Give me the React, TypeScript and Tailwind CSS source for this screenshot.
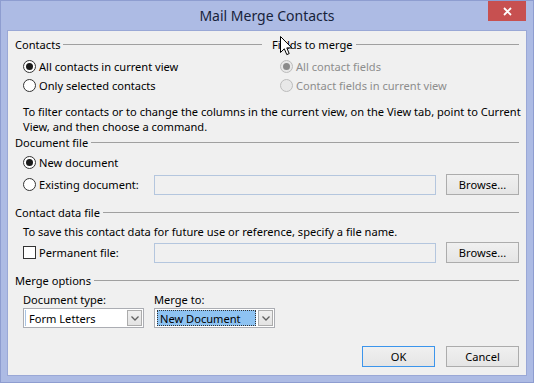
import clsx from "clsx";

const font = { fontFamily: '"Noto Sans", "Open Sans", sans-serif' };

function Radio({ checked, disabled }: { checked?: boolean; disabled?: boolean }) {
  return (
    <span
      className={clsx(
        "flex h-[13px] w-[13px] shrink-0 items-center justify-center rounded-full border",
        disabled ? "border-[#bcbcbc] bg-[#e8e8e8]" : "border-[#333333] bg-white"
      )}
    >
      {checked && (
        <span
          className={clsx(
            "h-[7px] w-[7px] rounded-full",
            disabled ? "bg-[#8a8a8a]" : "bg-[#1a1a1a]"
          )}
        />
      )}
    </span>
  );
}

function GroupHeader({ title }: { title: string }) {
  return (
    <div className="flex h-4 items-center gap-[3px]">
      <span className="whitespace-nowrap text-[#000]">{title}</span>
      <span className="h-px flex-1 bg-[#a0a0a0]" />
    </div>
  );
}

function Button({ label, focused }: { label: string; focused?: boolean }) {
  return (
    <div
      className={clsx(
        "flex h-[21px] w-[73px] shrink-0 items-center justify-center border bg-gradient-to-b from-[#f0f0f0] to-[#e5e5e5] text-black",
        focused ? "border-[#3c95ec]" : "border-[#acacac]"
      )}
    >
      {label}
    </div>
  );
}

function TextBox() {
  return <div className="h-5 w-[282px] shrink-0 border border-[#b4c6de] bg-[#f0f0f0]" />;
}

function Chevron() {
  return (
    <div className="flex h-4 w-[15px] items-center justify-center border border-[#acacac] bg-gradient-to-b from-[#f0f0f0] to-[#e3e3e3]">
      <svg width="8" height="5" viewBox="0 0 8 5">
        <polyline points="0.5,0.5 4,4 7.5,0.5" fill="none" stroke="#606060" strokeWidth="1.3" />
      </svg>
    </div>
  );
}

export default function App() {
  return (
    <div
      className="relative flex h-[383px] w-[534px] flex-col border border-[#8e9dd0] bg-[#adbbe4] text-[11.1px] leading-[15px] text-black"
      style={font}
    >
      {/* title bar */}
      <div className="flex h-[29px] shrink-0 items-center justify-center text-[14px] text-[#17233b]">
        Mail Merge Contacts
      </div>
      <div className="absolute right-[7px] top-0 flex h-5 w-[38px] items-center justify-center bg-[#c75050]">
        <svg width="9" height="9" viewBox="0 0 9 9">
          <path d="M1 1 L8 8 M8 1 L1 8" stroke="white" strokeWidth="1.8" />
        </svg>
      </div>

      {/* dialog body */}
      <div className="mx-[6px] mb-[6px] flex flex-1 flex-col border border-[#9aa8d6] bg-[#f0f0f0] px-[7px] pt-[5px]">
        <div className="grid grid-cols-2 gap-x-[10px]">
          <div>
            <GroupHeader title="Contacts" />
            <div className="mt-[5px] pl-2">
              <label className="flex h-[19px] items-center gap-[3px]">
                <Radio checked />
                All contacts in current view
              </label>
              <label className="flex h-[19px] items-center gap-[3px]">
                <Radio />
                Only selected contacts
              </label>
            </div>
          </div>
          <div>
            <GroupHeader title="Fields to merge" />
            <div className="mt-[5px] pl-2 text-[#8d8d8d]">
              <label className="flex h-[19px] items-center gap-[3px]">
                <Radio checked disabled />
                All contact fields
              </label>
              <label className="flex h-[19px] items-center gap-[3px]">
                <Radio disabled />
                Contact fields in current view
              </label>
            </div>
          </div>
        </div>

        <p className="mt-[9px] whitespace-nowrap pl-2">
          To filter contacts or to change the columns in the current view, on the View tab, point to Current
          <br />
          View, and then choose a command.
        </p>

        <GroupHeader title="Document file" />
        <label className="mt-[3px] flex h-[19px] items-center gap-[3px] pl-2">
          <Radio checked />
          New document
        </label>
        <div className="mt-[2px] flex h-[21px] items-center pl-2">
          <label className="flex w-[131px] items-center gap-[3px]">
            <Radio />
            Existing document:
          </label>
          <TextBox />
          <div className="ml-[10px]">
            <Button label="Browse..." />
          </div>
        </div>

        <div className="mt-[9px]">
          <GroupHeader title="Contact data file" />
        </div>
        <p className="mt-[4px] pl-2">To save this contact data for future use or reference, specify a file name.</p>
        <div className="mt-[3px] flex h-[21px] items-center pl-2">
          <label className="flex w-[131px] items-center gap-[3px]">
            <span className="h-[13px] w-[13px] shrink-0 border border-[#333333] bg-white" />
            Permanent file:
          </label>
          <TextBox />
          <div className="ml-[10px]">
            <Button label="Browse..." />
          </div>
        </div>

        <div className="mt-[9px]">
          <GroupHeader title="Merge options" />
        </div>
        <div className="mt-[4px] flex pl-2">
          <div className="w-[131px]">Document type:</div>
          <div>Merge to:</div>
        </div>
        <div className="mt-px flex pl-2">
          <div className="w-[131px]">
            <div className="flex h-5 w-[121px] items-center border border-[#abadb3] bg-white pl-[1px] pr-px">
              <span className="h-4 w-px bg-[#a9c4e4]" />
              <span className="flex-1 pl-[3px]">Form Letters</span>
              <Chevron />
            </div>
          </div>
          <div className="flex h-5 w-[121px] items-center border border-[#abadb3] bg-white pl-[2px] pr-px">
            <span className="flex h-4 w-[99px] items-center border border-dotted border-[#333] bg-[#8ec3f2] pl-[2px]">
              New Document
            </span>
            <span className="flex-1" />
            <Chevron />
          </div>
        </div>

        <div className="mt-[18px] flex justify-end gap-[11px]">
          <Button label="OK" focused />
          <Button label="Cancel" />
        </div>
      </div>

      {/* mouse pointer */}
      <svg className="absolute left-[279px] top-[35px]" width="13" height="20" viewBox="0 0 13 20">
        <path
          d="M0.5 0.5 L0.5 16.5 L4.3 12.8 L6.8 18.6 L9.2 17.6 L6.8 11.9 L11.8 11.9 Z"
          fill="white"
          stroke="black"
          strokeWidth="1"
          strokeLinejoin="round"
        />
      </svg>
    </div>
  );
}
